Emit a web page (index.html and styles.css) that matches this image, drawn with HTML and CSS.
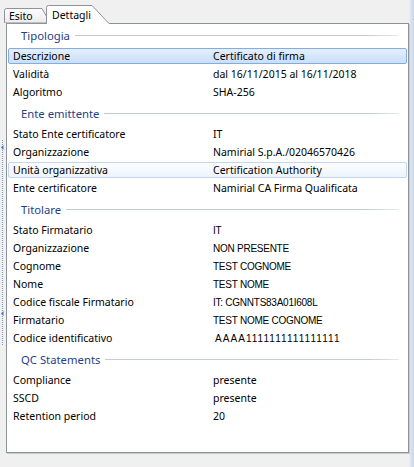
FILE: index.html
```html
<!DOCTYPE html>
<html lang="it">
<head>
<meta charset="utf-8">
<title>Dettagli certificato</title>
<link rel="stylesheet" href="styles.css">
</head>
<body>
<div class="window">
  <div class="splitter">
    <svg class="grip" width="4" height="206" viewBox="0 0 4 206">
      <line x1="2.5" y1="0" x2="2.5" y2="206" stroke="#7f96b8" stroke-width="1" stroke-dasharray="1 1"/>
      <path d="M3.5 5 L1 7.5 L3.5 10 Z" fill="#4a78b8"/>
      <path d="M3.5 171 L1 173.5 L3.5 176 Z" fill="#4a78b8"/>
    </svg>
  </div>
  <div class="main">
    <div class="tabs">
      <div class="tab tab-esito">
        <svg class="tab-shape" width="45" height="15" viewBox="0 0 45 15">
          <defs><linearGradient id="ge" x1="0" y1="0" x2="0" y2="1"><stop offset="0" stop-color="#fdfdfd"/><stop offset="1" stop-color="#ebebeb"/></linearGradient></defs>
          <path d="M0.5 15 V2.5 Q0.5 0.5 2.5 0.5 H38 L44.5 12 V15 Z" fill="url(#ge)" stroke="#8e929b"/>
        </svg>
        <span class="tab-label">Esito</span>
      </div>
      <div class="tab tab-dettagli">
        <svg class="tab-shape" width="64" height="19" viewBox="0 0 64 19">
          <path d="M0.5 19 V2.5 Q0.5 0.5 2.5 0.5 H46 L63 18.5 V19 Z" fill="#ffffff"/>
          <path d="M0.5 19 V2.5 Q0.5 0.5 2.5 0.5 H46 L63 18.5" fill="none" stroke="#8e929b"/>
        </svg>
        <span class="tab-label">Dettagli</span>
      </div>
    </div>
    <div class="panel">
      <section class="group first">
        <div class="ghead"><span class="gtitle">Tipologia</span><span class="gline"></span></div>
        <div class="row selected"><span class="lbl">Descrizione</span><span class="val">Certificato di firma</span></div>
        <div class="row"><span class="lbl">Validità</span><span class="val">dal 16/11/2015 al 16/11/2018</span></div>
        <div class="row"><span class="lbl">Algoritmo</span><span class="val">SHA-256</span></div>
      </section>
      <section class="group">
        <div class="ghead"><span class="gtitle">Ente emittente</span><span class="gline"></span></div>
        <div class="row"><span class="lbl">Stato Ente certificatore</span><span class="val">IT</span></div>
        <div class="row"><span class="lbl">Organizzazione</span><span class="val">Namirial S.p.A./02046570426</span></div>
        <div class="row hover"><span class="lbl">Unità organizzativa</span><span class="val">Certification Authority</span></div>
        <div class="row"><span class="lbl">Ente certificatore</span><span class="val">Namirial CA Firma Qualificata</span></div>
      </section>
      <section class="group">
        <div class="ghead"><span class="gtitle">Titolare</span><span class="gline"></span></div>
        <div class="row"><span class="lbl">Stato Firmatario</span><span class="val ms">IT</span></div>
        <div class="row"><span class="lbl">Organizzazione</span><span class="val ms">NON PRESENTE</span></div>
        <div class="row"><span class="lbl">Cognome</span><span class="val ms">TEST COGNOME</span></div>
        <div class="row"><span class="lbl">Nome</span><span class="val ms">TEST NOME</span></div>
        <div class="row"><span class="lbl">Codice fiscale Firmatario</span><span class="val ms">IT: CGNNTS83A01I608L</span></div>
        <div class="row"><span class="lbl">Firmatario</span><span class="val ms">TEST NOME COGNOME</span></div>
        <div class="row"><span class="lbl">Codice identificativo</span><span class="val ms code">AAAA1111111111111111</span></div>
      </section>
      <section class="group">
        <div class="ghead"><span class="gtitle">QC Statements</span><span class="gline"></span></div>
        <div class="row"><span class="lbl">Compliance</span><span class="val">presente</span></div>
        <div class="row"><span class="lbl">SSCD</span><span class="val">presente</span></div>
        <div class="row"><span class="lbl">Retention period</span><span class="val">20</span></div>
      </section>
    </div>
  </div>
  <div class="edge"></div>
</div>
</body>
</html>
```
FILE: styles.css
```css
html, body {
  margin: 0;
  padding: 0;
  background: #f0f0f0;
}

body {
  font-family: "Noto Sans", "Open Sans", sans-serif;
  font-size: 10.5px;
  color: #000;
}

.window {
  display: flex;
  width: 414px;
  height: 467px;
}

/* left splitter */
.splitter {
  width: 4px;
  flex: none;
  display: flex;
  flex-direction: column;
}
.grip {
  display: block;
  margin-top: 140px;
}

/* main column */
.main {
  width: 405px;
  flex: none;
  display: flex;
  flex-direction: column;
}

/* tabs */
.tabs {
  height: 23px;
  display: flex;
  align-items: flex-end;
  position: relative;
  z-index: 2;
}
.tab {
  position: relative;
  flex: none;
}
.tab-shape {
  position: absolute;
  left: 0;
  top: 0;
  display: block;
}
.tab-label {
  position: relative;
  display: block;
  white-space: nowrap;
}
.tab-esito {
  width: 45px;
  height: 15px;
}
.tab-esito .tab-label {
  padding: 1px 0 0 5px;
  line-height: 14px;
}
.tab-dettagli {
  width: 64px;
  height: 19px;
  margin-left: -3px;
  margin-bottom: -1px;
}
.tab-dettagli .tab-label {
  padding: 3px 0 0 6px;
  line-height: 14px;
}

/* panel */
.panel {
  flex: none;
  height: 427px;
  margin-left: 2px;
  border: 1px solid #8e929b;
  background: #fff;
  box-shadow: 1px 1px 0 #c9c9c9;
  padding-top: 1px;
  position: relative;
  z-index: 1;
}

.group {
  display: flex;
  flex-direction: column;
  margin-top: 2px;
}
.group.first {
  margin-top: 0;
}

.ghead {
  height: 22px;
  display: flex;
  align-items: center;
  padding: 0 9px 0 14px;
}
.gtitle {
  font-size: 11.3px;
  color: #1f3f86;
  white-space: nowrap;
  padding-bottom: 1px;
}
.gline {
  flex: 1;
  height: 1px;
  margin-left: 5px;
  margin-top: -1px;
  background: linear-gradient(to right, #c3ccd6, #c3ccd6 90%, #e6eaee);
}

.row {
  height: 16px;
  margin: 1px;
  border: 1px solid transparent;
  border-radius: 2px;
  box-sizing: border-box;
  display: flex;
  align-items: center;
  padding-left: 4px;
  white-space: nowrap;
}
.row.selected {
  border-color: #84acdd;
  background: linear-gradient(#e4effd, #c9dff9);
}
.row.hover {
  border-color: #c2d7ef;
  background: linear-gradient(#fbfdff, #eef4fc);
}
.lbl {
  width: 200px;
  flex: none;
}
.val {
  flex: none;
}
.val.ms {
  font-family: "Liberation Sans", Arial, sans-serif;
  font-size: 10px;
  letter-spacing: -0.25px;
}
.val.code {
  letter-spacing: 1.05px;
  padding-left: 2px;
}

/* right edge */
.edge {
  flex: 1;
  border-left: 1px solid #e9eef5;
  background: linear-gradient(to right, #dfe8f3, #c9d7e9);
}
```
